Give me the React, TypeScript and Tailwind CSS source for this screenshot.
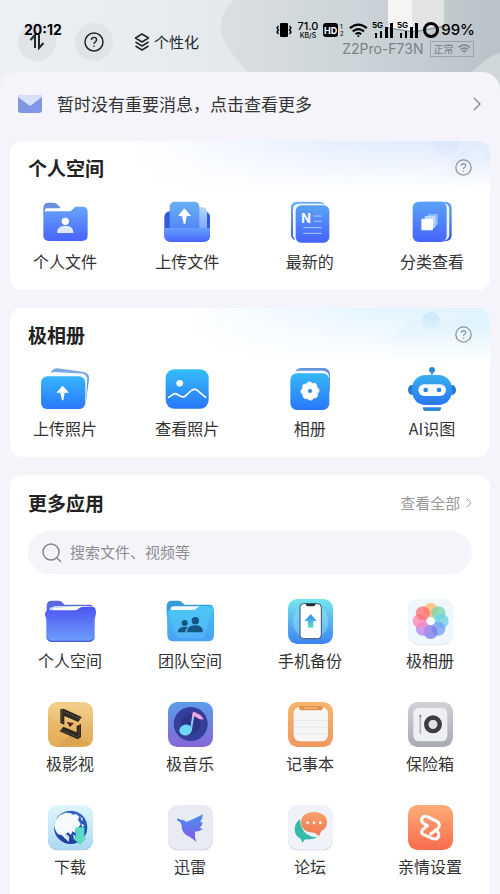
import type { ReactNode } from 'react';

type IconProps = { children: ReactNode };
type AppItem = { label: string; icon: ReactNode };

// Vertical two-stop gradient, referenced by id
function Grad({ id, from, to }: { id: string; from: string; to: string }) {
  return (
    <linearGradient id={id} x1="0" y1="0" x2="0" y2="1">
      <stop offset="0" stopColor={from} />
      <stop offset="1" stopColor={to} />
    </linearGradient>
  );
}

function WideIcon({ children }: IconProps) {
  return (
    <svg viewBox="0 0 144 132" className="h-11 w-12 overflow-visible" aria-hidden="true">
      {children}
    </svg>
  );
}

function TileIcon({ children }: IconProps) {
  return (
    <svg viewBox="0 0 135 135" className="size-[45px] overflow-visible" aria-hidden="true">
      {children}
    </svg>
  );
}

const spaceItems: AppItem[] = [
  {
    label: '个人文件',
    icon: (
      <WideIcon>
        <Grad id="pf" from="#68a4fb" to="#4763fb" />
        <path d="M7 45V24Q7 8 23 8h14q8 0 13 6l8 8v26Z" fill="#6d8fe0" />
        <path d="M12 40V30q0-5 6-5h76v16Z" fill="#fff" />
        <path d="M7 46q0-12 12-12h66q6 0 10-6t10-8h20q15 0 15 16v70q0 17-17 17H24q-17 0-17-17Z" fill="url(#pf)" />
        <circle cx="73" cy="64" r="11" fill="#fff" />
        <path d="M48 99q0-22 25-22t24 22Z" fill="#dfe9ff" />
      </WideIcon>
    ),
  },
  {
    label: '上传文件',
    icon: (
      <WideIcon>
        <Grad id="uf1" from="#68b0f3" to="#4f7df8" />
        <Grad id="uf2" from="#67a0fd" to="#4563fc" />
        <Grad id="uf3" from="#b5d6fb" to="#6f9bf8" />
        <rect x="4" y="34" width="137" height="90" rx="16" fill="#2f5cdc" />
        <rect x="84" y="22" width="48" height="80" rx="13" fill="url(#uf3)" />
        <rect x="20" y="5" width="89" height="100" rx="15" fill="url(#uf1)" />
        <path d="M4 84h137v22q0 20-20 20H24q-20 0-20-20Z" fill="url(#uf2)" />
        <path d="M64 25l20 23H71l-4 23h-5l-5-23H45Z" fill="#fff" />
      </WideIcon>
    ),
  },
  {
    label: '最新的',
    icon: (
      <WideIcon>
        <Grad id="nw1" from="#6fb2f4" to="#3f5edb" />
        <Grad id="nw2" from="#5aa2f3" to="#4662fb" />
        <rect x="15" y="5" width="103" height="116" rx="17" fill="url(#nw1)" />
        <rect x="21" y="11" width="102" height="112" rx="17" fill="#f4f9ff" />
        <rect x="29" y="16" width="101" height="112" rx="16" fill="url(#nw2)" />
        <text x="46" y="70" className="font-[Inter] text-[38px] font-bold" fill="#fff">N</text>
        <path d="M83 48h24M83 64h24M52 83h55M52 100h55" stroke="#a9ccff" strokeWidth="3" />
      </WideIcon>
    ),
  },
  {
    label: '分类查看',
    icon: (
      <WideIcon>
        <Grad id="ct1" from="#63a8ed" to="#3452d8" />
        <Grad id="ct2" from="#5ba2f5" to="#4664fc" />
        <rect x="28" y="5" width="103" height="119" rx="18" fill="url(#ct1)" />
        <rect x="20" y="9" width="104" height="113" rx="18" fill="#eaf4ff" />
        <rect x="14" y="5" width="102" height="121" rx="18" fill="url(#ct2)" />
        <rect x="60" y="42" width="29" height="34" rx="3" fill="#8fbcff" />
        <rect x="50" y="48" width="32" height="35" rx="3" fill="#bed8ff" />
        <rect x="40" y="56" width="35" height="35" rx="3" fill="#fff" />
      </WideIcon>
    ),
  },
];

const albumItems: AppItem[] = [
  {
    label: '上传照片',
    icon: (
      <WideIcon>
        <Grad id="up" from="#36b5fd" to="#2a78fb" />
        <Grad id="up2" from="#7fa9e4" to="#2f6fdc" />
        <rect x="24" y="9" width="116" height="106" rx="18" fill="url(#up2)" transform="rotate(8 82 62)" />
        <rect x="20" y="17" width="117" height="103" rx="18" fill="#f2f9ff" transform="rotate(3 78 68)" />
        <rect x="0" y="28" width="133" height="98" rx="19" fill="url(#up)" />
        <path d="M65 56l19 21H71l-4 23h-4l-5-23H46Z" fill="#fff" />
      </WideIcon>
    ),
  },
  {
    label: '查看照片',
    icon: (
      <WideIcon>
        <Grad id="vp" from="#35bcfa" to="#2977fb" />
        <rect x="8" y="7" width="129" height="118" rx="26" fill="url(#vp)" />
        <circle cx="50" cy="49" r="10" fill="#fff" />
        <path d="M17 91l15-10q5-3 10 1l11 6q9 5 16-3l14-13q10-9 20-2l25 21" fill="none" stroke="#fff" strokeWidth="5" strokeLinecap="round" strokeLinejoin="round" />
      </WideIcon>
    ),
  },
  {
    label: '相册',
    icon: (
      <WideIcon>
        <Grad id="al" from="#35b7f6" to="#2a77fb" />
        <rect x="27" y="3" width="105" height="80" rx="18" fill="#6694dc" />
        <rect x="20" y="11" width="109" height="80" rx="18" fill="#f7fbff" />
        <rect x="13" y="19" width="117" height="110" rx="20" fill="url(#al)" />
        {[0, 45, 90, 135, 180, 225, 270, 315].map(a => (
          <g key={a} transform={`rotate(${a} 72 72)`}>
            <path d="M72 69q-14-8-10-20 3-6 10-5 9 2 9 11 0 7-9 14" fill="#fff" stroke="#c9ddf6" strokeWidth="1" />
          </g>
        ))}
        <circle cx="72" cy="72" r="6" fill="#308aee" />
      </WideIcon>
    ),
  },
  {
    label: 'AI识图',
    icon: (
      <WideIcon>
        <Grad id="ai" from="#38aeed" to="#2876f8" />
        <path d="M72 10v20" stroke="#2b8bd5" strokeWidth="4" />
        <circle cx="72" cy="9" r="9" fill="#288bd5" />
        <ellipse cx="12" cy="69" rx="12" ry="15" fill="#287cd0" />
        <ellipse cx="132" cy="69" rx="12" ry="15" fill="#287cd0" />
        <rect x="13" y="24" width="118" height="90" rx="39" fill="url(#ai)" />
        <rect x="31" y="52" width="83" height="35" rx="17" fill="#f5fbff" />
        <circle cx="53" cy="69" r="7" fill="#2687df" />
        <circle cx="93" cy="69" r="7" fill="#2687df" />
        <path d="M45 121h54v4q0 7-7 7H52q-7 0-7-7Z" fill="#2c8bd0" />
      </WideIcon>
    ),
  },
];

const petals = ['#f9b96c', '#7ad3ab', '#6fd2e9', '#78a2f5', '#7d7eee', '#bb86ee', '#fc8ab5', '#fb7370'];

const moreItems: AppItem[] = [
  {
    label: '个人空间',
    icon: (
      <TileIcon>
        <Grad id="ps" from="#4c55f0" to="#6ea0fb" />
        <path d="M-4 45V21Q-4 5 12 5h20q8 0 12 6l5 6h76q12 0 12 13v20Z" fill="#5868df" />
        <path d="M5 40V27l16-6h115v18Z" fill="#c5d6ff" />
        <path d="M15 40V28l100-8v20Z" fill="#fff" />
        <path d="M-9 48q-1-14 12-14h79q6 0 11-6 5-5 11-5h27q13 0 13 16 0 6-2 14-2 5-2 12v45q0 19-19 19H14q-19 0-19-19V65q0-7-2-10Z" fill="url(#ps)" />
        <path d="M-5 108q0 21 19 21h107q19 0 19-21-3 17-19 17H14q-16 0-19-17Z" fill="#465be0" />
      </TileIcon>
    ),
  },
  {
    label: '团队空间',
    icon: (
      <TileIcon>
        <Grad id="ts" from="#41c3ef" to="#4c9ff8" />
        <path d="M-4 52V21Q-4 5 12 5h19q8 0 12 6l6 6h75q12 0 12 13v18Z" fill="#369bd9" />
        <path d="M8 44V28q0-6 10-6h80v22Z" fill="#f4fbff" />
        <path d="M-3 49q-1-16 12-16h66q8 0 13-7 5-5 11-5h23q16 0 16 16v70q0 20-19 20H17q-19 0-19-20Z" fill="url(#ts)" />
        <path d="M1 42l27 76h79l26-88-15-8H98L84 34H9Z" fill="#61d2fa" opacity=".35" />
        <circle cx="82" cy="65" r="11" fill="#145680" />
        <circle cx="50" cy="72" r="9" fill="#145680" />
        <path d="M57 100q0-21 25-21 23 0 23 21ZM29 100q1-16 21-17 6 0 9 2-7 6-7 15Z" fill="#145680" />
      </TileIcon>
    ),
  },
  {
    label: '手机备份',
    icon: (
      <TileIcon>
        <Grad id="ph" from="#74e7ed" to="#3c83f3" />
        <Grad id="pha" from="#3485f7" to="#5ce1cb" />
        <rect width="135" height="135" rx="28" fill="url(#ph)" />
        <circle cx="68" cy="68" r="53" fill="#a7e9fa" opacity=".4" />
        <rect x="36" y="14" width="64" height="105" rx="11" fill="#fff" stroke="#3b4c68" strokeWidth="3" />
        <path d="M54 14h28v2q0 6-6 6H60q-6 0-6-6Z" fill="#202b42" />
        <path d="M68 46l19 20H76v20H60V66H49Z" fill="url(#pha)" />
      </TileIcon>
    ),
  },
  {
    label: '极相册',
    icon: (
      <TileIcon>
        <rect y="2" width="135" height="135" rx="29" fill="#d9dfe5" />
        <rect width="135" height="135" rx="29" fill="#eef7fc" />
        {petals.map((color, i) => (
          <g key={color} transform={`rotate(${i * 45} 68 66)`}>
            <circle cx="68" cy="33" r="21" fill={color} opacity=".8" />
          </g>
        ))}
        <circle cx="68" cy="66" r="11" fill="#fff" />
      </TileIcon>
    ),
  },
  {
    label: '极影视',
    icon: (
      <TileIcon>
        <Grad id="mv" from="#f3d18d" to="#dda653" />
        <rect width="135" height="135" rx="28" fill="url(#mv)" />
        <path d="M0 38l68 58 67-5v16q0 28-28 28H28Q0 135 0 107Z" fill="#e8b460" opacity=".45" />
        <path d="M28 135L68 96l60 30" fill="#c68d3b" opacity=".3" />
        <path d="M37 22l10-2 54 25-10 15-42-18v26l-12-5Z" fill="#30291f" />
        <path d="M99 66v40l-10 6-54-24 11-14 40 17V72Z" fill="#30291f" />
        <path d="M41 26l55 24M42 60V30M41 84l50 22M93 70v36" stroke="#8b7550" strokeWidth="3" strokeDasharray="3 4" />
        <path d="M56 60l22 3-12 13Z" fill="#5c2a20" />
      </TileIcon>
    ),
  },
  {
    label: '极音乐',
    icon: (
      <TileIcon>
        <Grad id="mu" from="#5c9cea" to="#8566d7" />
        <Grad id="mun" from="#c0c8ff" to="#61c8f2" />
        <rect width="135" height="135" rx="28" fill="url(#mu)" />
        <circle cx="68" cy="66" r="51" fill="#333f99" />
        <circle cx="68" cy="66" r="29" fill="#2d3589" />
        <path d="M68 87l9-53" stroke="url(#mun)" strokeWidth="6" />
        <ellipse cx="53" cy="84" rx="19" ry="16" fill="#70d8f4" transform="rotate(-15 53 84)" />
        <path d="M75 29q8 0 13 6 9 0 19 17-13 2-20-5-5-4-14-4Z" fill="#f1a8db" />
      </TileIcon>
    ),
  },
  {
    label: '记事本',
    icon: (
      <TileIcon>
        <Grad id="nt" from="#f7b66f" to="#ee9860" />
        <rect width="135" height="135" rx="29" fill="url(#nt)" />
        <rect x="17" y="15" width="103" height="103" rx="19" fill="#f6f6f6" />
        <path d="M19 55h99M19 75h99M19 96h99" stroke="#dedede" strokeWidth="2" />
        <path d="M32 12h72v5q0 8-8 8H42q-8 0-8-8Z" fill="#e3934a" />
        <path d="M48 18h40" stroke="#f2b073" strokeWidth="5" />
      </TileIcon>
    ),
  },
  {
    label: '保险箱',
    icon: (
      <TileIcon>
        <Grad id="sf" from="#d0d2d7" to="#a7aab2" />
        <rect width="135" height="135" rx="29" fill="url(#sf)" />
        <rect x="16" y="17" width="102" height="101" rx="17" fill="#eeeff3" />
        <path d="M37 40v54" stroke="#b4b4b8" strokeWidth="5" strokeLinecap="round" />
        <circle cx="37" cy="43" r="3" fill="#777" />
        <circle cx="75" cy="67" r="20" fill="none" stroke="#3c3d40" strokeWidth="14" />
        <circle cx="75" cy="67" r="13" fill="#e1e1e5" />
      </TileIcon>
    ),
  },
  {
    label: '下载',
    icon: (
      <TileIcon>
        <Grad id="dl" from="#dff7fd" to="#add9f4" />
        <Grad id="dlg" from="#3169c4" to="#1c3fa0" />
        <rect y="2" width="135" height="134" rx="29" fill="#9dbfd0" />
        <rect width="135" height="134" rx="29" fill="url(#dl)" />
        <circle cx="68" cy="67" r="50" fill="url(#dlg)" />
        <path d="M22 46l15-17 16-6 15 1 6 5 10-2 10 8-4 9 8 13-6 10-9 5-1 12-9-5-4 11-9-8-7 5-1 14-10-10-13-4-8-14-3-12Z" fill="#f4fafd" />
        <path d="M54 86l10 10-2 15-12-12ZM74 88l9 6-3 10ZM96 34l9 8-3 7ZM100 56l10 5-8 6Z" fill="#d5eafb" />
        <path d="M83 67h26v32h8l-21 20-22-20h9Z" fill="#5bdac5" />
      </TileIcon>
    ),
  },
  {
    label: '迅雷',
    icon: (
      <TileIcon>
        <Grad id="bd" from="#468fe9" to="#8a58f0" />
        <rect y="2" width="135" height="134" rx="29" fill="#bfc2cb" />
        <rect width="135" height="134" rx="29" fill="#e9ebf2" />
        <path d="M28 40l11 4q10-1 15 7 23-8 51-23-2 15-9 24l8-1q-2 13-9 17l10 4q-12 8-24 8-2 13 4 31-11-11-21-16-22-8-23-32 0-12-13-16Z" fill="url(#bd)" />
      </TileIcon>
    ),
  },
  {
    label: '论坛',
    icon: (
      <TileIcon>
        <Grad id="fm" from="#f7a46a" to="#f17550" />
        <rect y="2" width="135" height="134" rx="29" fill="#c4c7cf" />
        <rect width="135" height="134" rx="29" fill="#f0f2f9" />
        <path d="M36 42q-16 13-16 31 0 20 18 28l5 12 9-10q22 2 37-6-50-2-53-55Z" fill="#35bca9" />
        <path d="M78 21q38 2 39 31 0 18-17 26l-7 15-13-10Q41 82 39 53 40 22 78 21Z" fill="url(#fm)" />
        <circle cx="59" cy="53" r="4" fill="#fff" />
        <circle cx="78" cy="53" r="4" fill="#fff" />
        <circle cx="97" cy="53" r="4" fill="#fff" />
      </TileIcon>
    ),
  },
  {
    label: '亲情设置',
    icon: (
      <TileIcon>
        <Grad id="fs" from="#fcac77" to="#f96d4d" />
        <rect width="135" height="135" rx="29" fill="url(#fs)" />
        <g fill="none" stroke="#fff" strokeWidth="9" strokeLinecap="round" strokeLinejoin="round">
          <path d="M58 62L44 53q-5-6-2-14 6-8 16-4l29 14q7 4 7 12 0 6-6 11L68 87" />
          <path d="M58 62L44 74q-7 10 3 15l28 12q12 4 17-7 3-12-9-17" />
        </g>
      </TileIcon>
    ),
  },
];

function HelpIcon() {
  return (
    <svg viewBox="0 0 20 20" className="size-full" fill="none" stroke="currentColor" aria-hidden="true">
      <circle cx="10" cy="10" r="9" strokeWidth="1.5" />
      <path d="M7.4 8q.1-2.6 2.7-2.6 2.5.1 2.5 2.3 0 1.2-1.3 2.1-1.3.8-1.3 2.1" strokeWidth="1.4" />
      <circle cx="10" cy="14.2" r=".4" strokeWidth="1" />
    </svg>
  );
}

function Chevron() {
  return (
    <svg viewBox="0 0 8 14" className="h-full" fill="none" stroke="currentColor" strokeWidth="1.3" aria-hidden="true">
      <path d="M1 1l6 6-6 6" />
    </svg>
  );
}

function Wifi() {
  return (
    <svg viewBox="0 0 20 16" className="h-full" fill="none" stroke="currentColor" strokeWidth="2.4" aria-hidden="true">
      <path d="M1 5.5Q10-2 19 5.5M4 9q6-5 12 0M7 12q3-2.5 6 0" />
      <circle cx="10" cy="14" r="1" fill="currentColor" stroke="none" />
    </svg>
  );
}

function Signal() {
  return (
    <svg viewBox="0 0 20 16" className="h-4 w-5 overflow-visible" fill="currentColor" aria-hidden="true">
      <text x="-1" y="6" className="font-[Inter] text-[8px] font-bold">5G</text>
      <path d="M2 11h2v5H2ZM7 9h2v7H7ZM12 5h3v11h-3ZM17 1h3v15h-3Z" />
    </svg>
  );
}

function HeaderBackdrop() {
  return (
    <svg viewBox="0 0 500 100" preserveAspectRatio="none" className="absolute inset-x-0 top-0 h-[100px] w-full" aria-hidden="true">
      <defs>
        <linearGradient id="hb1">
          <stop offset="0" stopColor="#eef1f4" />
          <stop offset=".45" stopColor="#e3e9ec" />
          <stop offset="1" stopColor="#dce3e6" />
        </linearGradient>
        <linearGradient id="hb2">
          <stop offset="0" stopColor="#d9dfe2" />
          <stop offset=".5" stopColor="#ccd4d8" />
          <stop offset="1" stopColor="#b9c3c7" />
        </linearGradient>
      </defs>
      <rect width="500" height="100" fill="url(#hb1)" />
      <path d="M234 0q-21 20-9 42 9 17 28 35v23h247V0Z" fill="url(#hb2)" />
      <path d="M472 72q15-15 28-20v48h-28Z" fill="#d0d7d9" />
      <path d="M388 0h24v31l-24-4Z" fill="#f5f5f5" />
      <path d="M412 0h32v25l-32 6Z" fill="#e2e3e3" />
      <path d="M388 28l26 4 32-6" fill="none" stroke="#858c8e" strokeWidth="1" />
    </svg>
  );
}

function StatusBar() {
  return (
    <div className="pointer-events-none absolute inset-x-0 top-[22px] flex h-4 items-center justify-between pr-[25px] pl-6 font-[Inter,sans-serif] text-black">
      <span className="text-sm font-bold">20:12</span>
      <div className="flex items-center gap-[5px]">
        <svg viewBox="0 0 16 16" className="size-4" aria-hidden="true">
          <rect x="4" y="1" width="8" height="14" rx="1" />
          <path d="M2.5 4L1 6l1.5 2L1 10l1.5 2M13.5 4L15 6l-1.5 2 1.5 2-1.5 2" fill="none" stroke="currentColor" strokeWidth="1.4" />
        </svg>
        <div className="flex flex-col items-center font-medium">
          <span className="text-[11px] leading-[11px]">71.0</span>
          <span className="text-[7px] leading-[7px]">KB/S</span>
        </div>
        <svg viewBox="0 0 21 16" className="h-4 w-[21px]" aria-hidden="true">
          <rect x="0" y="1" width="15" height="14" rx="3" />
          <text x="1" y="11.5" className="text-[9px] font-bold" fill="#fff">HD</text>
          <text x="17" y="7" className="text-[6px]">1</text>
          <text x="17" y="14" className="text-[6px]">2</text>
        </svg>
        <div className="h-[15px]"><Wifi /></div>
        <Signal />
        <Signal />
        <div className="flex items-center gap-0.5">
          <span className="size-4 rounded-full border-[3px] border-black" />
          <span className="text-[15px] font-medium">99%</span>
        </div>
      </div>
    </div>
  );
}

function Header() {
  return (
    <header className="relative h-[72px]">
      <div className="flex items-start pt-[23px] pr-[26px] pl-[18px] text-[#22272a]">
        <button aria-label="传输列表" className="flex size-[38px] items-center justify-center rounded-full bg-[#e0e4e8]">
          <svg viewBox="0 0 16 18" className="h-[18px] w-4" fill="none" stroke="currentColor" strokeWidth="2" aria-hidden="true">
            <path d="M1.5 7L6 2v13M10 2v13l4.5-5" />
          </svg>
        </button>
        <button aria-label="帮助" className="ml-[19px] flex size-[38px] items-center justify-center rounded-full bg-[#e0e4e8]">
          <span className="size-5"><HelpIcon /></span>
        </button>
        <button className="ml-[21px] flex h-[38px] items-center gap-1 text-[15px]">
          <svg viewBox="0 0 16 18" className="h-[18px] w-4" fill="none" stroke="currentColor" strokeWidth="1.5" strokeLinejoin="round" aria-hidden="true">
            <path d="M8 1l6.5 4L8 9 1.5 5ZM1.5 9L8 13l6.500-4M1.5 13L8 17l6.500-4" />
          </svg>
          个性化
        </button>
        <div className="mt-[18px] ml-auto flex items-center gap-1.5 text-[#7b8285]">
          <span className="font-[Inter,sans-serif] text-sm leading-4">Z2Pro-F73N</span>
          <span className="flex h-4 items-center gap-1 border border-[#9ba3a6] px-[3px] text-[10px] leading-none">
            正常
            <span className="h-2.5"><Wifi /></span>
          </span>
        </div>
      </div>
      <StatusBar />
    </header>
  );
}

function FeatureCard({ title, items, backdrop }: { title: string; items: AppItem[]; backdrop: ReactNode }) {
  return (
    <section className="relative mb-[18px] overflow-hidden rounded-xl bg-white pt-[15px] pb-[17px]">
      {backdrop}
      <div className="relative flex items-center justify-between px-[18px]">
        <h2 className="text-[19px] leading-[23px] font-bold text-[#222]">{title}</h2>
        <button aria-label={`${title}帮助`} className="size-[17px] text-[#8a929c]"><HelpIcon /></button>
      </div>
      <div className="relative mt-[21px] flex justify-between pr-[26px] pl-[23px]">
        {items.map(item => (
          <button key={item.label} className="flex w-16 flex-col items-center gap-[5px]">
            {item.icon}
            <span className="text-base leading-6 whitespace-nowrap">{item.label}</span>
          </button>
        ))}
      </div>
    </section>
  );
}

const spaceBackdrop = (
  <svg viewBox="0 0 480 50" preserveAspectRatio="none" className="absolute inset-x-0 top-0 h-[50px] w-full" aria-hidden="true">
    <defs>
      <linearGradient id="sb1">
        <stop offset=".25" stopColor="#e3eefd" stopOpacity="0" />
        <stop offset=".7" stopColor="#e3eefd" />
        <stop offset="1" stopColor="#dfebfc" />
      </linearGradient>
      <linearGradient id="fade" x1="0" y1="0" x2="0" y2="1">
        <stop offset="0" stopColor="#fff" stopOpacity="0" />
        <stop offset="1" stopColor="#fff" />
      </linearGradient>
    </defs>
    <rect width="480" height="50" fill="url(#sb1)" />
    <g fill="#cfe2fa" opacity=".4">
      <circle cx="436" cy="2" r="13" />
      <circle cx="454" cy="28" r="17" />
      <circle cx="480" cy="20" r="9" />
    </g>
    <rect width="480" height="50" fill="url(#fade)" />
  </svg>
);

const albumBackdrop = (
  <svg viewBox="0 0 480 54" preserveAspectRatio="none" className="absolute inset-x-0 top-0 h-[54px] w-full" aria-hidden="true">
    <defs>
      <linearGradient id="ab1">
        <stop offset=".35" stopColor="#e4f5fe" stopOpacity="0" />
        <stop offset=".75" stopColor="#e4f5fe" />
        <stop offset="1" stopColor="#def3fe" />
      </linearGradient>
    </defs>
    <rect width="480" height="54" fill="url(#ab1)" />
    <circle cx="421" cy="13" r="9" fill="#b9e3fb" opacity=".7" />
    <path d="M383 28q20-25 55-12 18-9 42-3v41h-97Z" fill="#c9eafc" opacity=".5" />
    <rect width="480" height="54" fill="url(#fade)" />
  </svg>
);

export default function App() {
  return (
    <div className="relative flex min-h-screen flex-col bg-[#dfe5e8] font-['Noto_Sans_CJK_SC',sans-serif] text-[#333]">
      <HeaderBackdrop />
      <Header />
      <main className="relative flex flex-1 flex-col rounded-t-[18px] bg-[#f4f4fa] px-2.5">
        <button className="flex h-[69px] items-center pr-[9px] pb-[6px] pl-2 text-[17px]">
          <svg viewBox="0 0 24 18" className="mr-[15px] h-[18px] w-6" aria-hidden="true">
            <rect width="24" height="18" rx="3" fill="#8197e6" />
            <path d="M0 2q0-2 3-2h18q3 0 3 2l-10.500 8q-1.500 1-3 0Z" fill="#d7e0fb" />
          </svg>
          暂时没有重要消息，点击查看更多
          <span className="ml-auto h-3.5 text-[#888]"><Chevron /></span>
        </button>

        <FeatureCard title="个人空间" items={spaceItems} backdrop={spaceBackdrop} />
        <FeatureCard title="极相册" items={albumItems} backdrop={albumBackdrop} />

        <section className="flex-1 rounded-t-xl bg-white pt-4">
          <div className="flex items-center justify-between px-[18px]">
            <h2 className="text-[19px] leading-[23px] font-bold text-[#222]">更多应用</h2>
            <a href="#all" className="flex items-center gap-1.5 text-[15px] leading-[23px] text-[#999]">
              查看全部
              <span className="h-2.5"><Chevron /></span>
            </a>
          </div>

          {/* Search */}
          <label className="mx-[18px] mt-[17px] flex h-[43px] items-center gap-2 rounded-full bg-[#f4f4fa] px-3.5">
            <svg viewBox="0 0 20 20" className="size-5" fill="none" stroke="#85858b" strokeWidth="1.5" aria-hidden="true">
              <circle cx="9" cy="9" r="8" />
              <path d="M15 15l4 4" />
            </svg>
            <input
              type="search"
              aria-label="搜索"
              placeholder="搜索文件、视频等"
              className="min-w-0 flex-1 bg-transparent text-[15px] outline-none placeholder:text-[#8e8e94]"
            />
          </label>

          {/* App grid */}
          <div className="mt-[25px] grid grid-cols-4 gap-y-[30px]">
            {moreItems.map(item => (
              <button key={item.label} className="flex flex-col items-center gap-1">
                {item.icon}
                <span className="text-base leading-6 whitespace-nowrap">{item.label}</span>
              </button>
            ))}
          </div>
        </section>
      </main>
    </div>
  );
}
